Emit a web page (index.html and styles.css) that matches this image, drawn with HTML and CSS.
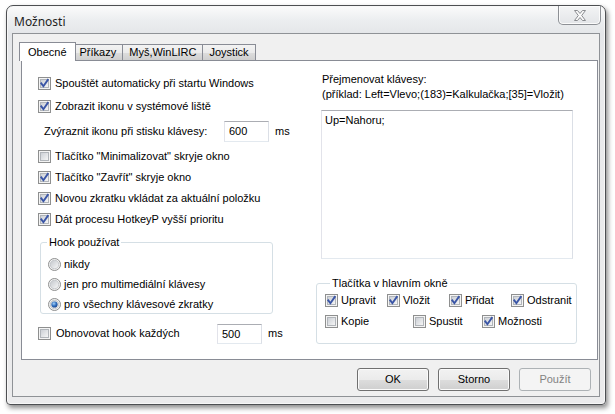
FILE: index.html
```html
<!DOCTYPE html>
<html lang="cs">
<head>
<meta charset="utf-8">
<title>Možnosti</title>
<link rel="stylesheet" href="styles.css">
</head>
<body>
<svg class="defs" width="0" height="0" aria-hidden="true">
  <defs>
    <linearGradient id="cbfill" x1="0" y1="0" x2="1" y2="1">
      <stop offset="0" stop-color="#c9cdd3"/>
      <stop offset="1" stop-color="#f8f8f8"/>
    </linearGradient>
    <linearGradient id="rbfill" x1="0" y1="0" x2="1" y2="1">
      <stop offset="0" stop-color="#c2c6cb"/>
      <stop offset="1" stop-color="#fafafa"/>
    </linearGradient>
    <radialGradient id="rbdot" cx="0.4" cy="0.35" r="0.7">
      <stop offset="0" stop-color="#a9d2f7"/>
      <stop offset="0.55" stop-color="#2f6fc0"/>
      <stop offset="1" stop-color="#1b3f86"/>
    </radialGradient>
    <symbol id="cb-off" viewBox="0 0 13 13">
      <rect x="0.5" y="0.5" width="12" height="12" fill="#f4f4f4" stroke="#8e8f8f"/>
      <rect x="2.5" y="2.5" width="8" height="8" fill="url(#cbfill)" stroke="#b1b5ba"/>
    </symbol>
    <symbol id="cb-on" viewBox="0 0 13 13">
      <rect x="0.5" y="0.5" width="12" height="12" fill="#f4f4f4" stroke="#8e8f8f"/>
      <rect x="2.5" y="2.5" width="8" height="8" fill="url(#cbfill)" stroke="#b1b5ba"/>
      <path d="M3.3 6.4 L5.4 9.2 L9.8 2.9" fill="none" stroke="#3a55a6" stroke-width="1.9" stroke-linecap="square"/>
    </symbol>
    <symbol id="rb-off" viewBox="0 0 13 13">
      <circle cx="6.5" cy="6.5" r="6" fill="#f4f4f4" stroke="#8e8f8f"/>
      <circle cx="6.5" cy="6.5" r="4.3" fill="url(#rbfill)" stroke="#bcc0c4" stroke-width="0.8"/>
    </symbol>
    <symbol id="rb-on" viewBox="0 0 13 13">
      <circle cx="6.5" cy="6.5" r="6" fill="#f4f4f4" stroke="#8e8f8f"/>
      <circle cx="6.5" cy="6.5" r="4.3" fill="url(#rbfill)" stroke="#bcc0c4" stroke-width="0.8"/>
      <circle cx="6.5" cy="6.5" r="3.1" fill="url(#rbdot)"/>
    </symbol>
  </defs>
</svg>

<div class="window">
  <div class="titlebar">
    <span class="title">Možnosti</span>
    <div class="close">
      <svg width="14" height="11" viewBox="0 0 14 11">
        <path d="M1.5 0.5 H4.5 L7 3.5 L9.5 0.5 H12.5 L8.7 5.5 L12.5 10.5 H9.5 L7 7.5 L4.5 10.5 H1.5 L5.3 5.5 Z" fill="#fbfbfb" stroke="#8a8c90" stroke-width="1" stroke-linejoin="round"/>
      </svg>
    </div>
  </div>

  <div class="client">
    <div class="tabs">
      <div class="tab sel">Obecné</div>
      <div class="tab">Příkazy</div>
      <div class="tab">Myš,WinLIRC</div>
      <div class="tab">Joystick</div>
    </div>

    <div class="panel">
      <div class="col-left">
        <div class="row r1"><svg class="box"><use href="#cb-on"/></svg><span>Spouštět automaticky při startu Windows</span></div>
        <div class="row r2"><svg class="box"><use href="#cb-on"/></svg><span>Zobrazit ikonu v systémové liště</span></div>
        <div class="row r3">
          <span class="lbl-zv">Zvýraznit ikonu při stisku klávesy:</span>
          <span class="edit edit-600">600</span>
          <span class="unit">ms</span>
        </div>
        <div class="row r4"><svg class="box"><use href="#cb-off"/></svg><span>Tlačítko "Minimalizovat" skryje okno</span></div>
        <div class="row r5"><svg class="box"><use href="#cb-on"/></svg><span>Tlačítko "Zavřít" skryje okno</span></div>
        <div class="row r6"><svg class="box"><use href="#cb-on"/></svg><span>Novou zkratku vkládat za aktuální položku</span></div>
        <div class="row r7"><svg class="box"><use href="#cb-on"/></svg><span>Dát procesu HotkeyP vyšší prioritu</span></div>

        <div class="group hook">
          <div class="group-label">Hook používat</div>
          <div class="radio rr1"><svg class="box"><use href="#rb-off"/></svg><span>nikdy</span></div>
          <div class="radio"><svg class="box"><use href="#rb-off"/></svg><span>jen pro multimediální klávesy</span></div>
          <div class="radio"><svg class="box"><use href="#rb-on"/></svg><span>pro všechny klávesové zkratky</span></div>
        </div>

        <div class="row r8">
          <svg class="box"><use href="#cb-off"/></svg><span class="lbl-obn">Obnovovat hook každých</span>
          <span class="edit edit-500">500</span>
          <span class="unit">ms</span>
        </div>
      </div>

      <div class="col-right">
        <div class="text-line l1">Přejmenovat klávesy:</div>
        <div class="text-line">(příklad: Left=Vlevo;(183)=Kalkulačka;[35]=Vložit)</div>
        <div class="memo">Up=Nahoru;</div>

        <div class="group btns">
          <div class="group-label">Tlačítka v hlavním okně</div>
          <div class="brow">
            <div class="bitem w62"><svg class="box"><use href="#cb-on"/></svg><span>Upravit</span></div>
            <div class="bitem w62"><svg class="box"><use href="#cb-on"/></svg><span>Vložit</span></div>
            <div class="bitem w62"><svg class="box"><use href="#cb-on"/></svg><span>Přidat</span></div>
            <div class="bitem"><svg class="box"><use href="#cb-on"/></svg><span>Odstranit</span></div>
          </div>
          <div class="brow">
            <div class="bitem w88"><svg class="box"><use href="#cb-off"/></svg><span>Kopie</span></div>
            <div class="bitem w69"><svg class="box"><use href="#cb-off"/></svg><span>Spustit</span></div>
            <div class="bitem"><svg class="box"><use href="#cb-on"/></svg><span>Možnosti</span></div>
          </div>
        </div>
      </div>
    </div>

    <div class="buttons">
      <div class="btn">OK</div>
      <div class="btn">Storno</div>
      <div class="btn disabled">Použít</div>
    </div>
  </div>
</div>
</body>
</html>
```

FILE: styles.css
```css
html, body {
  margin: 0;
  padding: 0;
}
body {
  width: 615px;
  height: 414px;
  overflow: hidden;
  background: #ffffff;
  font-family: "Liberation Sans", Arial, sans-serif;
  font-size: 11px;
  line-height: 13px;
  color: #000;
}
.defs {
  display: block;
  width: 0;
  height: 0;
  overflow: hidden;
}

/* window frame */
.window {
  box-sizing: border-box;
  margin: 5px 0 0 6px;
  width: 600px;
  height: 400px;
  border: 1px solid #4d4f52;
  border-radius: 7px 7px 4px 4px;
  background: linear-gradient(to bottom, #fbfbfb 0px, #eceef0 14px, #e4e6e9 28px, #e9eaec 60px, #ebebec 100%);
  box-shadow: 2px 3px 5px rgba(0, 0, 0, 0.45), inset 0 0 0 1px #f7f7f7;
  display: flex;
  flex-direction: column;
}
.titlebar {
  height: 27px;
  display: flex;
  align-items: flex-start;
  justify-content: space-between;
}
.title {
  font-family: "Noto Sans", "Open Sans", sans-serif;
  font-size: 12px;
  line-height: 16px;
  color: #1e1e1e;
  margin: 8px 0 0 7px;
}
.close {
  box-sizing: border-box;
  width: 43px;
  height: 19px;
  margin: 0 4px 0 0;
  border: 1px solid #8d9095;
  border-top: none;
  border-radius: 0 0 5px 5px;
  background: linear-gradient(to bottom, #f3f4f5, #e3e5e8);
  box-shadow: inset 0 0 0 1px #fbfbfb;
  display: flex;
  align-items: center;
  justify-content: center;
  padding-top: 1px;
}
.close svg { display: block; }

.client {
  box-sizing: border-box;
  margin: 0 5px;
  height: 364px;
  border: 1px solid #8f9296;
  background: #f0f0f0;
}

/* tabs */
.tabs {
  display: flex;
  align-items: flex-end;
  margin: 8px 0 0 8px;
  height: 18px;
}
.tab {
  box-sizing: border-box;
  height: 16px;
  padding: 1px 6px 0 6px;
  border: 1px solid #898c95;
  border-bottom: none;
  margin-left: -1px;
  background: linear-gradient(to bottom, #f3f3f3 0%, #ebebeb 50%, #dddddd 51%, #cfcfcf 100%);
  white-space: nowrap;
}
.tab:first-child { margin-left: 0; }
.tab.sel {
  position: relative;
  z-index: 1;
  height: 19px;
  margin: 0 -2px -1px -2px;
  padding: 3px 8px 0 8px;
  background: #ffffff;
}

/* panel */
.panel {
  box-sizing: border-box;
  width: 577px;
  height: 300px;
  margin-left: 8px;
  border: 1px solid #898c95;
  background: #ffffff;
  display: flex;
}
.col-left {
  width: 294px;
  padding: 12px 0 0 16px;
  box-sizing: border-box;
}
.col-right {
  flex: 1;
  padding: 11px 0 0 0;
  box-sizing: border-box;
}

.box {
  width: 13px;
  height: 13px;
  flex: none;
  display: block;
}

.row {
  display: flex;
  align-items: center;
  height: 21px;
  white-space: nowrap;
}
.row .box { margin-right: 4px; }
.r2 { margin-top: 2px; }
.r3 { margin-top: 3px; height: 22px; }
.r4 { margin-top: 3px; height: 22px; }
.r5 { margin-top: 0; }
.r6 { margin-top: 0; }
.r7 { margin-top: 0; }
.lbl-zv {
  margin-left: 6px;
  width: 180px;
}
.edit {
  box-sizing: border-box;
  width: 45px;
  height: 21px;
  border: 1px solid;
  border-color: #abadb3 #dbdfe6 #e3e9ef #e2e3ea;
  background: #fff;
  padding: 3px 0 0 4px;
}
.unit { margin-left: 6px; }
.edit-500 { height: 20px; padding-top: 3px; }
.lbl-obn { width: 161px; margin-left: 1px; }
.r8 { margin-top: 9px; }

/* group boxes */
.group {
  box-sizing: border-box;
  border: 1px solid #d5dfe5;
  border-radius: 3px;
}
.group-label {
  display: table;
  margin: -7px 0 0 6px;
  padding: 0 2px;
  background: #fff;
  white-space: nowrap;
}
.hook {
  width: 233px;
  height: 72px;
  margin: 12px 0 0 2px;
}
.radio {
  display: flex;
  align-items: center;
  height: 20px;
  padding-left: 7px;
  white-space: nowrap;
}
.radio .box { margin-right: 3px; }
.rr1 { margin-top: 5px; }

.text-line {
  line-height: 15px;
  padding-left: 6px;
  white-space: nowrap;
}
.memo {
  box-sizing: border-box;
  width: 252px;
  height: 149px;
  margin: 8px 0 0 5px;
  border: 1px solid;
  border-color: #abadb3 #dbdfe6 #e3e9ef #e2e3ea;
  background: #fff;
  padding: 3px 0 0 3px;
}

.btns {
  width: 261px;
  height: 61px;
  margin: 24px 0 0 0;
  padding-left: 8px;
}
.btns .group-label { margin-left: 5px; }
.brow {
  display: flex;
  align-items: center;
  height: 21px;
}
.brow:first-of-type { margin-top: 3px; }
.bitem {
  display: flex;
  align-items: center;
  white-space: nowrap;
}
.bitem .box { margin-right: 3px; }
.w62 { width: 62px; }
.w88 { width: 88px; }
.w69 { width: 69px; }

/* buttons */
.buttons {
  display: flex;
  justify-content: flex-end;
  gap: 9px;
  margin: 8px 8px 0 0;
}
.btn {
  box-sizing: border-box;
  width: 72px;
  height: 23px;
  border: 1px solid #707070;
  border-radius: 3px;
  background: linear-gradient(to bottom, #f2f2f2 0%, #ebebeb 50%, #dddddd 51%, #cfcfcf 100%);
  box-shadow: inset 0 0 0 1px #fbfbfb;
  display: flex;
  align-items: center;
  justify-content: center;
  padding-bottom: 1px;
}
.btn.disabled {
  border-color: #adb2b5;
  background: #f4f4f4;
  box-shadow: none;
  color: #838383;
}
```
